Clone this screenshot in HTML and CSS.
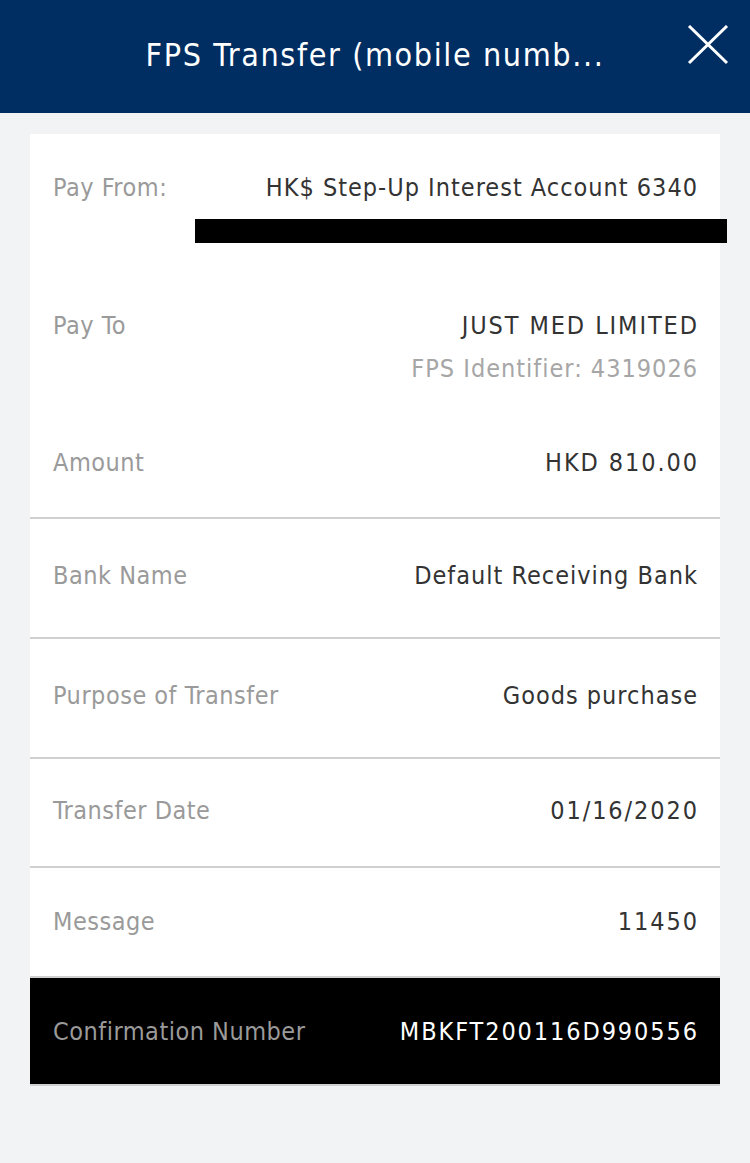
FILE: index.html
```html
<!DOCTYPE html>
<html>
<head>
<meta charset="utf-8">
<link rel="stylesheet" href="styles.css">
</head>
<body>
<header class="topbar">
  <h1 class="title">FPS Transfer (mobile numb...</h1>
  <button class="close" aria-label="Close">
    <svg width="42" height="40" viewBox="0 0 42 40"><path d="M2 1 L40 38 M40 1 L2 38" stroke="#fff" stroke-width="3" fill="none"/></svg>
  </button>
</header>
<main class="page">
  <section class="card">
    <div class="row row-from">
      <span class="label">Pay From:</span>
      <span class="value">HK$ Step-Up Interest Account 6340</span>
      <div class="redact"></div>
    </div>
    <div class="row row-to">
      <span class="label">Pay To</span>
      <div class="value-stack">
        <span class="value wide">JUST MED LIMITED</span>
        <span class="sub">FPS Identifier: 4319026</span>
      </div>
    </div>
    <div class="row row-amount">
      <span class="label">Amount</span>
      <span class="value wide">HKD 810.00</span>
    </div>
    <div class="row row-lined r-bank">
      <span class="label">Bank Name</span>
      <span class="value">Default Receiving Bank</span>
    </div>
    <div class="row row-lined r-purpose">
      <span class="label">Purpose of Transfer</span>
      <span class="value">Goods purchase</span>
    </div>
    <div class="row row-lined r-date">
      <span class="label">Transfer Date</span>
      <span class="value wide">01/16/2020</span>
    </div>
    <div class="row row-lined r-msg">
      <span class="label">Message</span>
      <span class="value wide">11450</span>
    </div>
    <div class="row row-lined r-conf">
      <span class="label">Confirmation Number</span>
      <span class="value wide">MBKFT200116D990556</span>
    </div>
  </section>
</main>
</body>
</html>
```
FILE: styles.css
```css
* { box-sizing: border-box; }
html, body { margin: 0; padding: 0; }
body {
  background: #f2f3f5;
  font-family: "DejaVu Sans Condensed", "DejaVu Sans", sans-serif;
  font-stretch: condensed;
  width: 750px;
  height: 1163px;
  overflow: hidden;
}
.topbar {
  height: 113px;
  background: #002d62;
  display: flex;
  align-items: center;
  justify-content: center;
  position: relative;
}
.title {
  margin: -4px 0 0;
  color: #fff;
  font-weight: normal;
  font-size: 32px;
  line-height: 40px;
  letter-spacing: 1.6px;
}
.close {
  position: absolute;
  right: 21px;
  top: 25px;
  background: none;
  border: 0;
  padding: 0;
  line-height: 0;
}
.page {
  padding: 21px 30px 0;
}
.card {
  background: #fff;
  border-bottom: 2px solid #d0d0d0;
}
.row {
  display: flex;
  justify-content: space-between;
  align-items: flex-start;
  padding: 0 23px;
  position: relative;
  font-size: 25px;
  line-height: 30px;
}
.label { color: #9a9a9a; letter-spacing: 0.5px; }
.value { color: #333; text-align: right; letter-spacing: 1px; margin-right: -1px; }
.value.wide { letter-spacing: 1.9px; margin-right: -1.9px; }
.value-stack { display: flex; flex-direction: column; align-items: flex-end; gap: 13px; }
.sub { color: #a6a6a6; letter-spacing: 1px; margin-right: -1px; }
.row-from { padding-top: 39px; padding-bottom: 69px; }
.row-to { padding-top: 39px; padding-bottom: 25px; }
.row-amount { padding-top: 39px; padding-bottom: 39px; }
.row-lined { border-top: 2px solid #d0d0d0; }
.r-bank, .r-purpose { padding-top: 42px; padding-bottom: 46px; }
.r-date { padding-top: 37px; padding-bottom: 40px; }
.r-msg { padding-top: 39px; padding-bottom: 39px; }
.r-conf { padding-top: 39px; padding-bottom: 37px; background: #000; }
.r-conf .label { color: #9a9a9a; }
.r-conf .value { color: #fff; }
.redact {
  position: absolute;
  left: 165px;
  top: 85px;
  width: 532px;
  height: 24px;
  background: #000;
}
```
